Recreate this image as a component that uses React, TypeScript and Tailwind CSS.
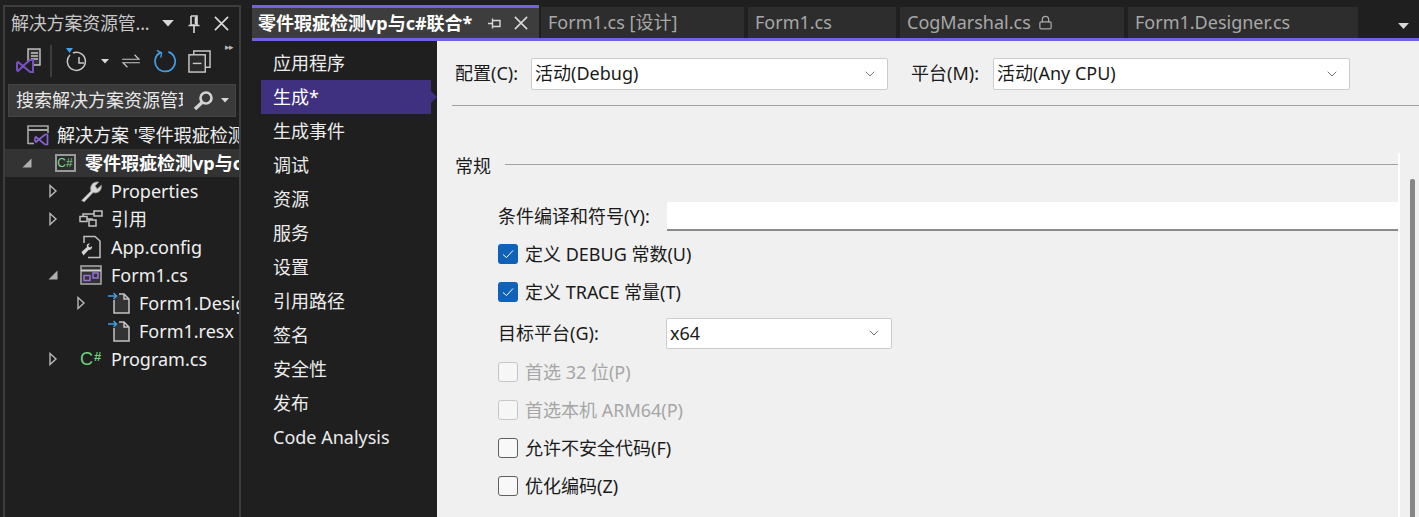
import { ChevronDown, Lock } from "lucide-react";

const FONT = "font-['Noto_Sans','Noto_Sans_CJK_SC',sans-serif]";

const navItems = ["应用程序", "生成*", "生成事件", "调试", "资源", "服务", "设置", "引用路径", "签名", "安全性", "发布", "Code Analysis"];

function Caret({ open }: { open?: boolean }) {
  return (
    <svg width="10" height="14" viewBox="0 0 10 14" className="shrink-0">
      {open ? (
        <path d="M0.5 11.5 L9.5 11.5 L9.5 2.5 Z" fill="#b0b0b0" />
      ) : (
        <path d="M2 1.5 L8 7 L2 12.5 Z" fill="none" stroke="#b8b8b8" strokeWidth="1.4" />
      )}
    </svg>
  );
}

function TriangleDown({ size = 9 }: { size?: number }) {
  return (
    <svg width={size} height={size / 2 + 1} viewBox="0 0 10 6">
      <path d="M0 0 H10 L5 5.5 Z" fill="#d8d8d8" />
    </svg>
  );
}

function CloseIcon({ size }: { size: number }) {
  return (
    <svg width={size} height={size} viewBox="0 0 16 16" fill="none" stroke="#d8d8d8" strokeWidth="1.8" className="shrink-0">
      <path d="M1 1 L15 15 M15 1 L1 15" />
    </svg>
  );
}

function PanelPin() {
  return (
    <svg width="12" height="18" viewBox="0 0 12 18" fill="none" stroke="#d8d8d8" strokeWidth="1.6" className="shrink-0">
      <path d="M3 1 V10 H9 V1 H3 M0.5 10.5 H11.5 M6 11 V18 M7.5 2 V9" />
    </svg>
  );
}

function TabPin() {
  return (
    <svg width="13" height="11" viewBox="0 0 13 11" fill="none" stroke="#d8d8d8" strokeWidth="1.4" className="shrink-0">
      <path d="M0 5.5 H4 M4.5 0.5 V10.5 M4.5 2.5 H12 V8.5 H4.5" />
    </svg>
  );
}

function CsIcon({ boxed }: { boxed?: boolean }) {
  if (boxed) {
    return (
      <div className="w-[21px] h-[18px] bg-[#2e2e2e] border-2 border-[#9a9a9a] flex items-center justify-center text-[12px] leading-none text-[#7fd88a] font-['Liberation_Sans',sans-serif]">
        C#
      </div>
    );
  }
  return (
    <div className="w-[22px] flex items-start leading-none text-[#6fcf7c] font-['Liberation_Sans',sans-serif]">
      <span className="text-[18px] leading-none">C</span>
      <span className="text-[13px] font-bold leading-none ml-[1px]">#</span>
    </div>
  );
}

function SolutionIcon() {
  return (
    <svg width="22" height="22" viewBox="0 0 22 22" fill="none" className="shrink-0">
      <path d="M1 20 V2 H21 V9" stroke="#a8a8a8" strokeWidth="1.6" />
      <path d="M1 6 H21" stroke="#a8a8a8" strokeWidth="2" />
      <path d="M1 19.5 H7" stroke="#a8a8a8" strokeWidth="1.6" />
      <path d="M9 13 L12 15.5 L9 18 L8 17 V14 Z M12 15.5 L18 10.5 H20.5 V20.5 H18 L12 15.5 Z" stroke="#8a63d2" strokeWidth="1.7" />
    </svg>
  );
}

function WrenchIcon() {
  return (
    <svg width="23" height="23" viewBox="0 0 22 22" fill="none">
      <path d="M1.5 19.5 L10.5 10.5 C9 5.5 12.5 1 18 2 L14.5 5.5 L16.5 8.5 L20.5 5 C21 10.5 16.5 13.5 12.5 12 L4 21 Z" fill="#d8d8d8" stroke="#8e8e8e" strokeWidth="0.8" />
    </svg>
  );
}

function RefIcon() {
  return (
    <svg width="24" height="18" viewBox="0 0 24 18" fill="none" stroke="#c4c4c4" strokeWidth="1.5">
      <rect x="1" y="6.5" width="7" height="5" />
      <rect x="15" y="1" width="8" height="5" />
      <rect x="10" y="10" width="7" height="6" />
      <path d="M4 6.5 V4 H15 M8 9 H13 V10" />
    </svg>
  );
}

function ConfigIcon() {
  return (
    <svg width="22" height="24" viewBox="0 0 22 24" fill="none">
      <path d="M4 8 V1.5 H15 L20 6 V22.5 H8" stroke="#c0c0c0" strokeWidth="1.5" />
      <path d="M1.5 17 L7 12 C6 9.5 8 8 10 8.5 L8 11 L10 12.5 L12 11 C12.5 14 10 15.5 8.5 15 L3.5 20.5 Z" fill="#d4d4d4" />
    </svg>
  );
}

function FormIcon() {
  return (
    <svg width="22" height="20" viewBox="0 0 22 20" fill="none">
      <rect x="1" y="1" width="20" height="18" fill="#333" stroke="#a4a4a4" strokeWidth="1.6" />
      <path d="M1 5.5 H21" stroke="#d0d0d0" strokeWidth="2" />
      <rect x="4" y="10.5" width="6" height="5" stroke="#9a70dc" strokeWidth="1.5" />
      <rect x="13" y="8" width="5" height="5" stroke="#9a70dc" strokeWidth="1.5" />
    </svg>
  );
}

function LinkedFileIcon() {
  return (
    <svg width="22" height="24" viewBox="0 0 22 24" fill="none">
      <path d="M6 8 V22 H21 V8 L16 3 H11" fill="#333" />
      <path d="M6 9 V22 H21 V8 L16 3 H11 M16 3 V8 H21" stroke="#c4c4c4" strokeWidth="1.5" />
      <path d="M0 5 H8 M5.5 2 L8.5 5 L5.5 8" stroke="#3f9fe8" strokeWidth="1.5" />
    </svg>
  );
}

function TreeRow({
  pad,
  caret,
  icon,
  label,
  bold,
  selected,
}: {
  pad: string;
  caret?: "open" | "closed";
  icon: React.ReactNode;
  label: string;
  bold?: boolean;
  selected?: boolean;
}) {
  return (
    <div className={`h-[28px] flex items-center whitespace-nowrap overflow-hidden ${pad} ${selected ? "bg-[#333333]" : ""}`}>
      <div className="w-[28px] flex justify-start shrink-0">{caret && <Caret open={caret === "open"} />}</div>
      <div className="w-[30px] flex justify-center shrink-0">{icon}</div>
      <span className={`text-[18px] ml-[5px] ${bold ? "font-bold text-white" : "text-[#f0f0f0]"}`}>{label}</span>
    </div>
  );
}

function SolutionPanel() {
  return (
    <div className="w-[238px] ml-[3px] mt-[5px] border-x-2 border-t-2 border-[#3d3d3d] flex flex-col overflow-hidden shrink-0">
      <div className="h-[33px] flex items-center pl-[6px] pr-[10px] text-[#c8c8c8]">
        <span className="text-[18px] whitespace-nowrap tracking-[-0.2px]">解决方案资源管...</span>
        <span className="ml-auto flex items-center gap-[14px]">
          <TriangleDown size={12} />
          <PanelPin />
          <CloseIcon size={15} />
        </span>
      </div>
      <div className="h-[42px] flex items-center pl-[11px] relative">
        <svg width="26" height="26" viewBox="0 0 26 26" fill="none" className="shrink-0">
          <rect x="12" y="1" width="12" height="16" fill="#333" stroke="#c8c8c8" strokeWidth="1.4" />
          <path d="M15 5 H22 M15 8 H22 M15 11 H22" stroke="#c8c8c8" strokeWidth="1.3" />
          <path d="M2 14 L7 18 L2 23 L1 22 V15 Z M7 18 L14 12 H17 V24 H14 L7 18 Z" fill="#1f1f1f" stroke="#7a4fc4" strokeWidth="2" />
        </svg>
        <div className="w-[2px] h-[32px] bg-[#3d3d3d] ml-[8px] shrink-0" />
        <svg className="ml-[14px] shrink-0" width="24" height="26" viewBox="0 0 24 26" fill="none">
          <path d="M0 0 H7 L3.5 5 Z" fill="#3f9fe8" />
          <path d="M4 7 A9 9 0 1 0 7 5" stroke="#c8c8c8" strokeWidth="1.5" />
          <path d="M13 9 V15 H18" stroke="#c8c8c8" strokeWidth="1.5" />
        </svg>
        <span className="ml-[11px]"><TriangleDown size={8} /></span>
        <svg className="ml-[12px] shrink-0" width="20" height="16" viewBox="0 0 22 18" fill="none" stroke="#c8c8c8" strokeWidth="1.3">
          <path d="M1 7 H20 L15 2" />
          <path d="M21 11 H2 L7 16" />
        </svg>
        <svg className="ml-[13px] shrink-0" width="23" height="24" viewBox="0 0 24 24" fill="none" stroke="#3f9fe8" strokeWidth="1.8">
          <path d="M7 3 A10.5 10.5 0 1 0 15 2.5" />
          <path d="M3 1 L8 3.5 L7 8.5" strokeWidth="1.4" />
        </svg>
        <svg className="ml-[11px] shrink-0" width="23" height="23" viewBox="0 0 24 24" fill="none" stroke="#c8c8c8" strokeWidth="1.5">
          <rect x="1" y="5" width="17" height="18" fill="#2a2a2a" />
          <path d="M6 5 V1 H23 V18 H18" />
          <path d="M5 14 H14" />
        </svg>
        <div className="absolute right-[6px] top-[2px] text-[#b8b8b8] text-[9px] leading-none tracking-[-1px]">▸▸</div>
      </div>
      <div className="ml-[3px] mr-[3px] mt-[2px] h-[33px] bg-[#3a3a3a] border border-[#444] flex items-center pl-[7px] pr-[6px]">
        <span className="text-[18px] text-[#e8e8e8] whitespace-nowrap overflow-hidden w-[167px] shrink-0">搜索解决方案资源管理器</span>
        <svg className="ml-[10px] shrink-0" width="21" height="21" viewBox="0 0 21 21" fill="none">
          <circle cx="13" cy="8" r="5.5" stroke="#d4d4d4" strokeWidth="2.6" />
          <path d="M9 12.5 L2 19" stroke="#d4d4d4" strokeWidth="3.4" />
        </svg>
        <span className="ml-auto"><TriangleDown size={8} /></span>
      </div>
      <div className="mt-[4px] flex flex-col">
        <div className="h-[28px] flex items-center pl-[22px] whitespace-nowrap overflow-hidden">
          <SolutionIcon />
          <span className="text-[18px] text-[#f0f0f0] ml-[8px]">解决方案 '零件瑕疵检测vp与c#联合'</span>
        </div>
        <TreeRow pad="pl-[17px]" caret="open" icon={<CsIcon boxed />} label="零件瑕疵检测vp与c#联合" bold selected />
        <TreeRow pad="pl-[43px]" caret="closed" icon={<WrenchIcon />} label="Properties" />
        <TreeRow pad="pl-[43px]" caret="closed" icon={<RefIcon />} label="引用" />
        <TreeRow pad="pl-[43px]" icon={<ConfigIcon />} label="App.config" />
        <TreeRow pad="pl-[43px]" caret="open" icon={<FormIcon />} label="Form1.cs" />
        <TreeRow pad="pl-[71px]" caret="closed" icon={<LinkedFileIcon />} label="Form1.Designer.cs" />
        <TreeRow pad="pl-[71px]" icon={<LinkedFileIcon />} label="Form1.resx" />
        <TreeRow pad="pl-[43px]" caret="closed" icon={<CsIcon />} label="Program.cs" />
      </div>
    </div>
  );
}

function TabBar() {
  const tabs = [
    { label: "Form1.cs [设计]", w: "w-[203px]" },
    { label: "Form1.cs", w: "w-[148px]" },
    { label: "CogMarshal.cs", w: "w-[224px]", lock: true },
    { label: "Form1.Designer.cs", w: "w-[230px]" },
  ];
  return (
    <div className="h-[33px] mt-[5px] flex items-stretch border-b-[3px] border-[#7160e8] box-content shrink-0">
      <div className="w-[287px] bg-[#3d3d3d] border-t-[3px] border-[#7160e8] flex items-center pl-[6px] pr-[11px] text-white">
        <span className="text-[18px] font-bold whitespace-nowrap">零件瑕疵检测vp与c#联合*</span>
        <span className="ml-auto"><TabPin /></span>
        <span className="ml-[13px]"><CloseIcon size={14} /></span>
      </div>
      <div className="flex items-stretch gap-[4px] ml-[2px] pt-[2px]">
        {tabs.map((t) => (
          <div key={t.label} className={`${t.w} bg-[#2d2d2d] flex items-center pl-[7px] text-[18px] text-[#a8a8a8] whitespace-nowrap`}>
            {t.label}
            {t.lock && <Lock size={15} className="ml-[7px]" />}
          </div>
        ))}
      </div>
      <div className="ml-auto mr-[10px] flex items-center pt-[10px]">
        <TriangleDown size={11} />
      </div>
    </div>
  );
}

function PropNav() {
  return (
    <div className="w-[185px] pl-[9px] pt-[5px] shrink-0 flex flex-col">
      {navItems.map((item, i) => (
        <div
          key={item}
          className={`relative h-[34px] w-[170px] flex items-center pl-[12px] text-[18px] whitespace-nowrap ${i === 1 ? "bg-[#3f3180] text-white" : "text-[#ececec]"}`}
        >
          {item}
          {i === 1 && <div className="absolute left-[170px] top-[11px] border-y-[6px] border-y-transparent border-l-[6px] border-l-[#3f3180]" />}
        </div>
      ))}
    </div>
  );
}

function DropBox({ value, w, h = "h-[32px]" }: { value: string; w: string; h?: string }) {
  return (
    <div className={`${w} ${h} bg-white border border-[#cccccc] rounded-[2px] flex items-center pl-[3px] pr-[9px] text-[18px] text-[#1a1a1a] shrink-0`}>
      {value}
      <ChevronDown size={16} strokeWidth={1.2} className="ml-auto text-[#555]" />
    </div>
  );
}

function Check({ label, state }: { label: string; state: "on" | "off" | "disabled" }) {
  return (
    <div className="h-[38px] flex items-center">
      {state === "on" ? (
        <div className="w-[20px] h-[20px] rounded-[3px] bg-[#0f62b8] flex items-center justify-center shrink-0">
          <svg width="12" height="10" viewBox="0 0 12 10" fill="none">
            <path d="M1 5.5 L4.5 8.5 L11 1.5" stroke="#fff" strokeWidth="1" />
          </svg>
        </div>
      ) : (
        <div className={`w-[20px] h-[20px] rounded-[3px] border shrink-0 ${state === "off" ? "border-[#5f5f5f] bg-[#f8f8f8]" : "border-[#c6c6c6] bg-[#f6f6f6]"}`} />
      )}
      <span className={`ml-[7px] text-[18px] whitespace-nowrap ${state === "disabled" ? "text-[#a6a6a6]" : "text-[#1a1a1a]"}`}>{label}</span>
    </div>
  );
}

function PropContent() {
  return (
    <div className="relative flex-1 bg-[#f0f0f0] min-w-0 overflow-hidden">
      <div className="h-[63px] pt-[1px] ml-[15px] border-b border-[#a0a0a0] flex items-center box-content">
        <span className="ml-[3px] text-[18px] text-[#1a1a1a] w-[76px] whitespace-nowrap">配置(C):</span>
        <DropBox value="活动(Debug)" w="w-[357px]" />
        <span className="ml-[23px] text-[18px] text-[#1a1a1a] w-[82px] whitespace-nowrap">平台(M):</span>
        <DropBox value="活动(Any CPU)" w="w-[357px]" />
      </div>
      <div className="mt-[47px] w-[963px] border-r-2 border-white h-[400px]">
        <div className="flex items-center h-[26px] pl-[18px]">
          <span className="text-[18px] text-[#1a1a1a]">常规</span>
          <div className="flex-1 ml-[14px] h-[1px] bg-[#a0a0a0] mb-[4px]" />
        </div>
        <div className="pl-[61px] mt-[23px]">
          <div className="flex items-center h-[28px]">
            <span className="w-[169px] text-[18px] text-[#1a1a1a] whitespace-nowrap">条件编译和符号(Y):</span>
            <div className="flex-1 h-[29px] bg-white border-b-2 border-[#8a8a8a]" />
          </div>
          <div className="mt-[5px]">
            <Check label="定义 DEBUG 常数(U)" state="on" />
            <Check label="定义 TRACE 常量(T)" state="on" />
          </div>
          <div className="h-[42px] pt-[2px] flex items-center">
            <span className="w-[168px] text-[18px] text-[#1a1a1a]">目标平台(G):</span>
            <DropBox value="x64" w="w-[226px]" h="h-[31px]" />
          </div>
          <Check label="首选 32 位(P)" state="disabled" />
          <Check label="首选本机 ARM64(P)" state="disabled" />
          <Check label="允许不安全代码(F)" state="off" />
          <Check label="优化编码(Z)" state="off" />
        </div>
      </div>
      <div className="absolute left-[973px] top-[138px] w-[5px] h-[400px] bg-[#868686] rounded-t-[2px]" />
    </div>
  );
}

export default function App() {
  return (
    <div className={`w-[1419px] h-[517px] bg-[#1f1f1f] flex overflow-hidden ${FONT}`}>
      <SolutionPanel />
      <div className="ml-[11px] flex-1 min-w-0 flex flex-col">
        <TabBar />
        <div className="flex flex-1 min-h-0">
          <PropNav />
          <PropContent />
        </div>
      </div>
    </div>
  );
}
